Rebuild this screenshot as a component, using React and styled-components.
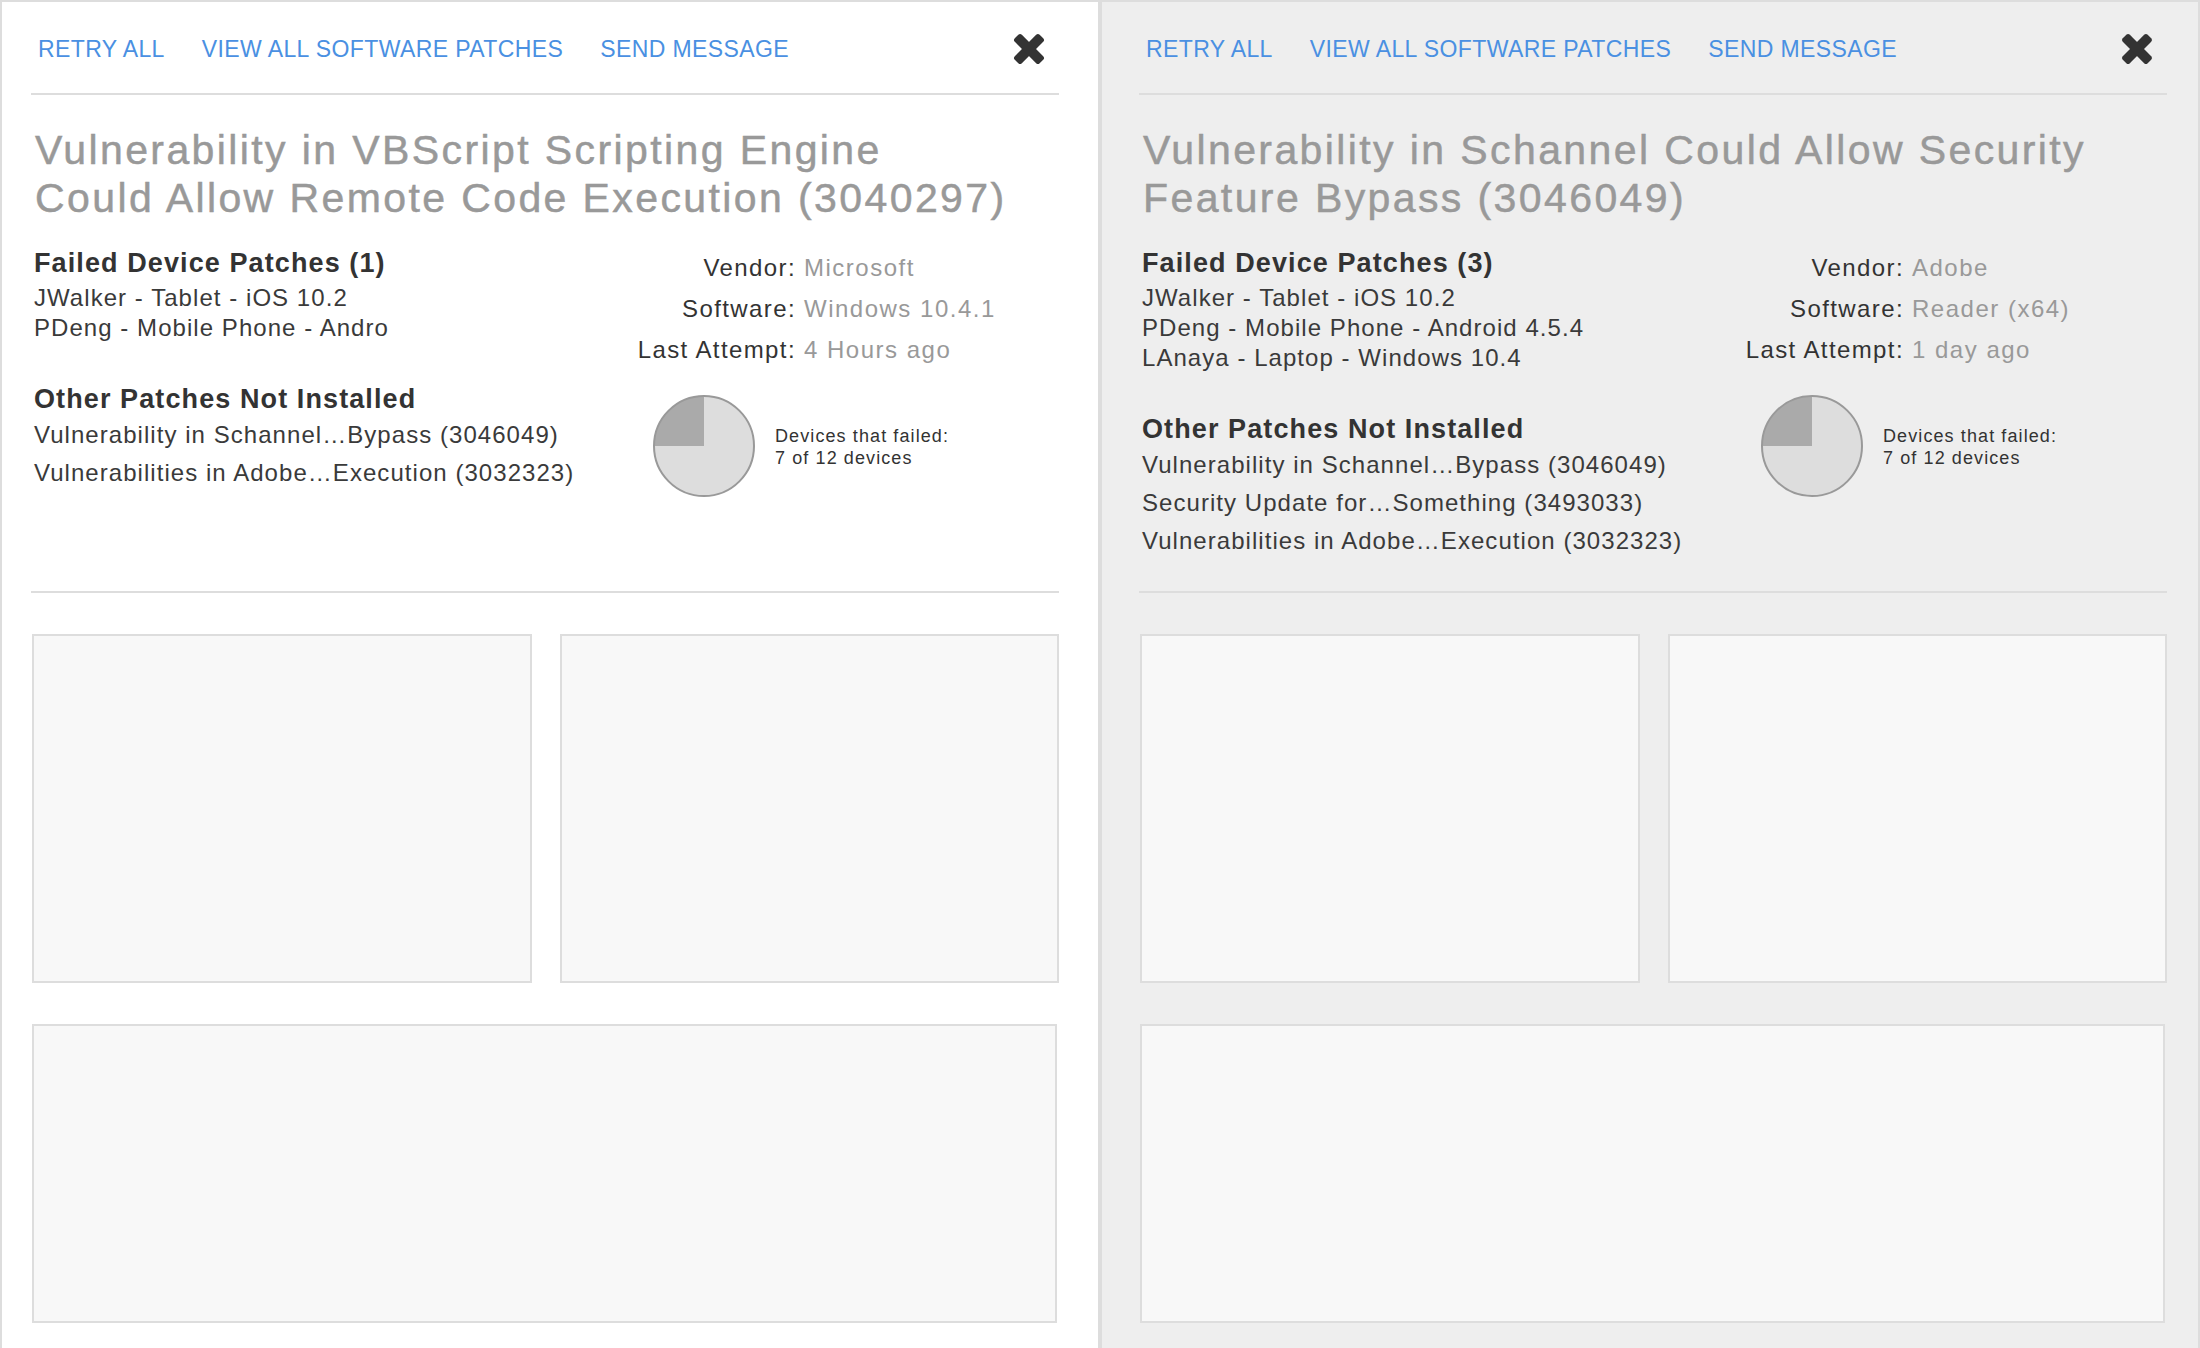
import React from "react";
import styled, { createGlobalStyle } from "styled-components";

const GlobalStyle = createGlobalStyle`
  html, body {
    margin: 0;
    padding: 0;
    background: #ffffff;
  }
  body {
    font-family: "Liberation Sans", Arial, Helvetica, sans-serif;
    color: #333;
  }
  * { box-sizing: border-box; }
`;

const Page = styled.div`
  display: flex;
  width: 2200px;
  min-height: 1348px;
  border-top: 2px solid #ddd;
`;

const Panel = styled.section`
  flex: 0 0 auto;
  width: ${(p) => p.$width}px;
  background: ${(p) => (p.$tone === "gray" ? "#eeeeee" : "#ffffff")};
  border-left: ${(p) => p.$borderLeft}px solid #ddd;
  border-right: ${(p) => p.$borderRight}px solid #ddd;
  padding: 0 ${(p) => p.$padRight}px 0 ${(p) => p.$padLeft}px;
`;

const Header = styled.header`
  display: flex;
  align-items: center;
  height: 91px;
  padding: 3px 14px 0 7px;
`;

const NavLinks = styled.nav`
  display: flex;
  gap: 37px;
`;

const NavLink = styled.a`
  color: #4a90e2;
  font-size: 23px;
  line-height: 30px;
  letter-spacing: 0.4px;
  text-transform: uppercase;
  text-decoration: none;
  cursor: pointer;
`;

const CloseButton = styled.button`
  margin-left: auto;
  width: 32px;
  height: 32px;
  padding: 0;
  border: 0;
  background: transparent;
  display: flex;
  cursor: pointer;
`;

const Rule = styled.div`
  height: 2px;
  background: #ddd;
`;

const Title = styled.h1`
  margin: 31px 0 0;
  padding-left: 4px;
  max-width: 982px;
  font-size: 41px;
  line-height: 48px;
  font-weight: normal;
  letter-spacing: 2.4px;
  color: #999;
  -webkit-text-stroke: 0.5px #999;
`;

const Info = styled.div`
  display: grid;
  grid-template-columns: 589px 1fr;
  height: 344px;
  margin-top: 25px;
`;

const LeftCol = styled.div`
  padding-left: 3px;
`;

const SectionHeading = styled.h2`
  margin: ${(p) => p.$mt || 0}px 0 0;
  font-size: 27px;
  line-height: 32px;
  font-weight: bold;
  letter-spacing: 1.1px;
  color: #333;
`;

const ItemList = styled.ul`
  list-style: none;
  margin: ${(p) => p.$mt || 0}px 0 0;
  padding: 0;
`;

const Item = styled.li`
  font-size: 24px;
  line-height: ${(p) => p.$lh}px;
  letter-spacing: 1.05px;
  color: #3a3a3a;
  white-space: nowrap;
`;

const RightCol = styled.div`
  display: flex;
  flex-direction: column;
`;

const MetaGrid = styled.dl`
  display: grid;
  grid-template-columns: 176px auto;
  column-gap: 8px;
  margin: 0;
  font-size: 24px;
  line-height: 41px;
`;

const MetaLabel = styled.dt`
  text-align: right;
  color: #333;
  letter-spacing: 1.4px;
`;

const MetaValue = styled.dd`
  margin: 0;
  color: #999;
  letter-spacing: 1.5px;
`;

const PieRow = styled.div`
  display: flex;
  align-items: center;
  gap: 20px;
  margin: 25px 0 0 33px;
`;

const PieCaption = styled.div`
  font-size: 18px;
  line-height: 22px;
  letter-spacing: 1.1px;
  color: #333;
  padding-top: 1px;
`;

const CardGrid = styled.div`
  display: grid;
  grid-template-columns: 1fr 1fr;
  gap: 41px 28px;
  margin-top: 41px;
  padding-left: 1px;
`;

const Card = styled.div`
  height: ${(p) => p.$height}px;
  grid-column: ${(p) => (p.$wide ? "1 / -1" : "auto")};
  margin-right: ${(p) => (p.$wide ? 2 : 0)}px;
  background: #f8f8f8;
  border: 2px solid #ddd;
`;

const CloseIcon = () => (
  <svg width="32" height="32" viewBox="0 0 32 32" aria-hidden="true">
    <g transform="translate(16 16)" fill="#333">
      <rect x="-5" y="-17.6" width="10" height="35.2" rx="2.5" transform="rotate(45)" />
      <rect x="-5" y="-17.6" width="10" height="35.2" rx="2.5" transform="rotate(-45)" />
    </g>
  </svg>
);

const Pie = () => (
  <svg width="102" height="102" viewBox="0 0 102 102" aria-hidden="true">
    <circle cx="51" cy="51" r="50" fill="#dddddd" />
    <path d="M51 51 L51 1 A50 50 0 0 0 1 51 Z" fill="#aaaaaa" />
    <circle cx="51" cy="51" r="50" fill="none" stroke="#999" strokeWidth="2" />
  </svg>
);

const panels = [
  {
    tone: "light",
    width: 1098,
    borderLeft: 2,
    borderRight: 0,
    padLeft: 29,
    padRight: 39,
    title: "Vulnerability in VBScript Scripting Engine Could Allow Remote Code Execution (3040297)",
    failedCount: 1,
    devices: ["JWalker - Tablet - iOS 10.2", "PDeng - Mobile Phone - Andro"],
    vendor: "Microsoft",
    software: "Windows 10.4.1",
    attempt: "4 Hours ago",
    others: [
      "Vulnerability in Schannel…Bypass (3046049)",
      "Vulnerabilities in Adobe…Execution (3032323)",
    ],
  },
  {
    tone: "gray",
    width: 1102,
    borderLeft: 4,
    borderRight: 2,
    padLeft: 37,
    padRight: 31,
    title: "Vulnerability in Schannel Could Allow Security Feature Bypass (3046049)",
    failedCount: 3,
    devices: [
      "JWalker - Tablet - iOS 10.2",
      "PDeng - Mobile Phone - Android 4.5.4",
      "LAnaya - Laptop - Windows 10.4",
    ],
    vendor: "Adobe",
    software: "Reader (x64)",
    attempt: "1 day ago",
    others: [
      "Vulnerability in Schannel…Bypass (3046049)",
      "Security Update for…Something (3493033)",
      "Vulnerabilities in Adobe…Execution (3032323)",
    ],
  },
];

const PatchPanel = ({ data }) => (
  <Panel
    $tone={data.tone}
    $width={data.width}
    $borderLeft={data.borderLeft}
    $borderRight={data.borderRight}
    $padLeft={data.padLeft}
    $padRight={data.padRight}
  >
    <Header>
      <NavLinks>
        <NavLink>Retry All</NavLink>
        <NavLink>View All Software Patches</NavLink>
        <NavLink>Send Message</NavLink>
      </NavLinks>
      <CloseButton aria-label="Close">
        <CloseIcon />
      </CloseButton>
    </Header>
    <Rule />
    <Title>{data.title}</Title>
    <Info>
      <LeftCol>
        <SectionHeading>Failed Device Patches ({data.failedCount})</SectionHeading>
        <ItemList $mt={4}>
          {data.devices.map((d) => (
            <Item key={d} $lh={30}>{d}</Item>
          ))}
        </ItemList>
        <SectionHeading $mt={40}>Other Patches Not Installed</SectionHeading>
        <ItemList $mt={1}>
          {data.others.map((o) => (
            <Item key={o} $lh={38}>{o}</Item>
          ))}
        </ItemList>
      </LeftCol>
      <RightCol>
        <MetaGrid>
          <MetaLabel>Vendor:</MetaLabel>
          <MetaValue>{data.vendor}</MetaValue>
          <MetaLabel>Software:</MetaLabel>
          <MetaValue>{data.software}</MetaValue>
          <MetaLabel>Last Attempt:</MetaLabel>
          <MetaValue>{data.attempt}</MetaValue>
        </MetaGrid>
        <PieRow>
          <Pie />
          <PieCaption>
            Devices that failed:
            <br />7 of 12 devices
          </PieCaption>
        </PieRow>
      </RightCol>
    </Info>
    <Rule />
    <CardGrid>
      <Card $height={349} />
      <Card $height={349} />
      <Card $height={299} $wide />
    </CardGrid>
  </Panel>
);

export default function App() {
  return (
    <>
      <GlobalStyle />
      <Page>
        {panels.map((p) => (
          <PatchPanel key={p.tone} data={p} />
        ))}
      </Page>
    </>
  );
}
